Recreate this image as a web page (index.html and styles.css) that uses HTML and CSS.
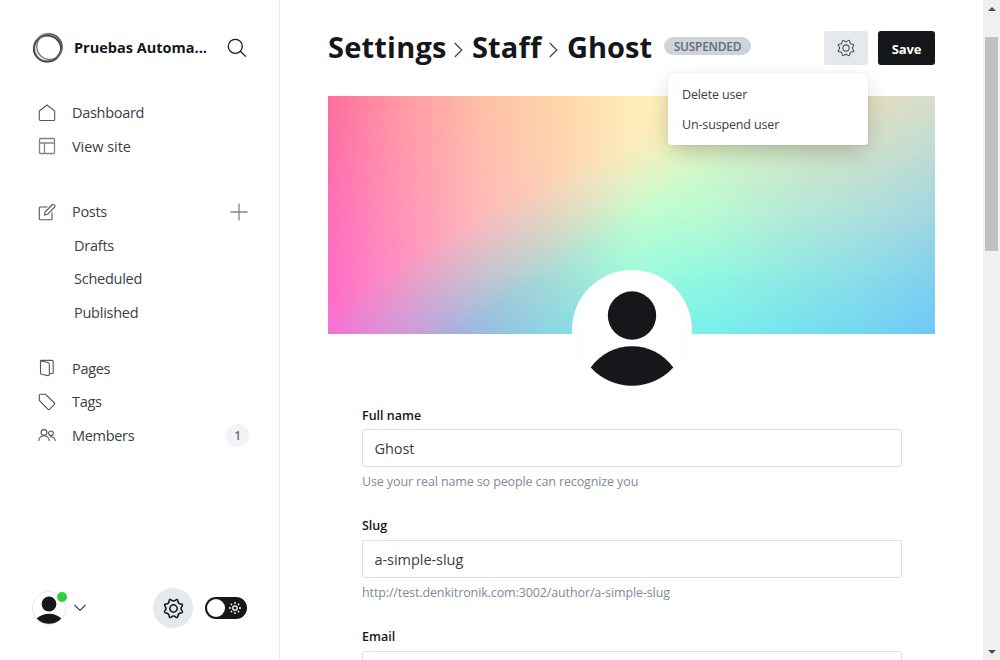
FILE: index.html
```html
<!DOCTYPE html>
<html lang="en">
<head>
<meta charset="utf-8">
<title>Settings - Staff - Ghost</title>
<link rel="stylesheet" href="styles.css">
</head>
<body>
<svg width="0" height="0" class="defs">
  <symbol id="gear" viewBox="-12 -12 24 24">
    <path d="M9.53-2.39Q7.5 0 9.53 2.39Q11.55 4.78 8.43 5.04Q5.3 5.3 5.04 8.43Q4.78 11.55 2.39 9.53Q0 7.5-2.39 9.53Q-4.78 11.55-5.04 8.43Q-5.3 5.3-8.43 5.04Q-11.55 4.78-9.53 2.39Q-7.5 0-9.53-2.39Q-11.55-4.78-8.43-5.04Q-5.3-5.3-5.04-8.43Q-4.78-11.55-2.39-9.53Q0-7.5 2.39-9.53Q4.78-11.55 5.04-8.43Q5.3-5.3 8.43-5.04Q11.55-4.78 9.53-2.39Z"/>
    <circle r="4.2"/>
  </symbol>
</svg>
<div class="app">
  <aside class="sidebar">
    <header class="brand">
      <svg class="logo" viewBox="0 0 32 32">
        <ellipse cx="16" cy="15.6" rx="13.900" ry="13.300" stroke="#aaa" stroke-width="2.600" transform="rotate(-45 16 16)"/>
        <ellipse cx="15.400" cy="16.800" rx="13.600" ry="13" stroke="#3a3a3a" stroke-width="1.600"/>
        <ellipse cx="17.400" cy="14.600" rx="12.800" ry="12.600" stroke="#777" stroke-width="1.400" transform="rotate(30 17 15)"/>
        <ellipse cx="16" cy="15.600" rx="14.200" ry="13" stroke="#555" stroke-width="1" transform="rotate(-45 16 16)"/>
      </svg>
      <span class="site">Pruebas Automa...</span>
      <svg class="search" viewBox="0 0 20 20"><circle cx="8.3" cy="8.3" r="7"/><path d="M13.3 13.3L18.8 18.6"/></svg>
    </header>
    <nav class="nav">
      <a class="row"><svg class="ico" viewBox="0 0 18 18"><path d="M1.3 7L9 1l7.700 6v8.500a1 1 0 0 1-1 1H2.300a1 1 0 0 1-1-1z"/></svg><span>Dashboard</span></a>
      <a class="row"><svg class="ico light" viewBox="0 0 18 18"><rect x="1.500" y="1.500" width="15" height="15" rx="1"/><path d="M1.500 6h15M6.500 6v10.500"/></svg><span class="wide">View site</span></a>
      <a class="row gap-lg"><svg class="ico" viewBox="0 0 18 18"><path d="M9.500 4H2.300a1 1 0 0 0-1 1v10.700a1 1 0 0 0 1 1H13a1 1 0 0 0 1-1V9.500"/><path d="M6.500 12l.7-3.200L14 2a1.600 1.600 0 0 1 2.400 2.300L9.600 11.200z"/></svg><span>Posts</span>
        <svg class="plus" viewBox="0 0 18 18"><path d="M9 .5v17M.5 9h17"/></svg></a>
      <a class="row sub">Drafts</a>
      <a class="row sub">Scheduled</a>
      <a class="row sub">Published</a>
      <a class="row gap-md"><svg class="ico" viewBox="0 0 18 18"><path d="M2.500 2L9.800 3.500a1.800 1.800 0 0 1 1.500 1.800V15.600a1 1 0 0 1-1.200 1L3.500 15.200a1.200 1.200 0 0 1-1-1.200z"/><path d="M2.500 2.200a1 1 0 0 1 .8-.8H14.200a1 1 0 0 1 1 1V13.500a1 1 0 0 1-1 1H11.300"/></svg><span>Pages</span></a>
      <a class="row"><svg class="ico" viewBox="0 0 18 18"><path d="M1.300 2.300a1 1 0 0 1 1-1h5.200L16.400 10a1 1 0 0 1 0 1.400l-4.900 4.900a1 1 0 0 1-1.400 0L1.300 7.500z"/></svg><span>Tags</span></a>
      <a class="row"><svg class="ico" viewBox="0 0 18 18"><circle cx="6" cy="6.500" r="2.900"/><path d="M.8 15v-.7a5.200 4.600 0 0 1 10.400 0v.7"/><circle cx="13" cy="7.300" r="2.300"/><path d="M12 10.900a4.200 4.200 0 0 1 5.300 3.600v.5"/></svg><span>Members</span><span class="count">1</span></a>
    </nav>
    <footer class="foot">
      <div class="me">
        <svg class="me-pic" viewBox="0 0 34 34"><circle cx="17" cy="17" r="16.500" fill="#fff" stroke="#e5e8ea"/><circle cx="17" cy="13" r="7.400" fill="#15171a"/><path d="M4.700 27.400a16.500 14 0 0 1 24.600 0a16.700 16.700 0 0 1-24.600 0z" fill="#15171a"/></svg>
        <i class="online"></i>
      </div>
      <svg class="chev" viewBox="0 0 12 8"><path d="M.5 1L6 6.500 11.500 1"/></svg>
      <span class="cog"><svg viewBox="0 0 24 24"><use href="#gear"/></svg></span>
      <span class="toggle"><i class="knob"></i>
        <svg class="sun" viewBox="-7 -7 14 14"><circle r="2.200"/><path d="M0-6v2M0 4v2M-6 0h2M4 0h2M-4.200-4.200l1.300 1.300M2.900 2.900l1.300 1.300M-4.200 4.200l1.300-1.300M2.900-2.900l1.300-1.300"/></svg></span>
    </footer>
  </aside>
  <main class="main">
    <header class="head">
      <h1 class="title"><span class="c1">Settings</span><svg class="sep" viewBox="0 0 9 16"><path d="M.8 1L7.800 8 .8 15"/></svg><span class="c2">Staff</span><svg class="sep" viewBox="0 0 9 16"><path d="M.8 1L7.800 8 .8 15"/></svg><span class="c3">Ghost</span></h1>
      <span class="badge">SUSPENDED</span>
      <div class="actions">
        <button class="btn-gear"><svg viewBox="0 0 24 24"><use href="#gear"/></svg></button>
        <button class="btn-save">Save</button>
        <div class="menu"><a>Delete user</a><a>Un-suspend user</a></div>
      </div>
    </header>
    <section class="cover">
      <div class="tones warm"><i class="w0"></i><i class="w1"></i></div>
      <div class="tones cool"><i class="k0"></i><i class="k1"></i><i class="k2"></i><i class="k3"></i><i class="k4"></i></div>
      <svg class="avatar" viewBox="0 0 120 120"><circle cx="60" cy="60" r="60" fill="#fff"/><circle cx="60" cy="60" r="56" fill="none" stroke="#f9fafb"/><circle cx="60" cy="45.500" r="24.200" fill="#15171a"/><path d="M18.700 97.500C39 69 81 69 101.300 97.500A56 56 0 0 1 18.700 97.500z" fill="#15171a"/></svg>
    </section>
    <form class="form">
      <div class="field"><label class="first">Full name</label><div class="input">Ghost</div><p>Use your real name so people can recognize you</p></div>
      <div class="field"><label>Slug</label><div class="input">a-simple-slug</div><p>http://test.denkitronik.com:3002/author/a-simple-slug</p></div>
      <div class="field"><label>Email</label><div class="input"></div></div>
    </form>
  </main>
  <div class="scroll"><i class="up"></i><i class="thumb"></i><i class="down"></i></div>
</div>
</body>
</html>
```
FILE: styles.css
```css
* { box-sizing: border-box; }
body { margin: 0; font-family: "Open Sans", "Noto Sans", sans-serif; color: #394047; background: #fff; }
svg { fill: none; flex: none; display: block; }
.defs { position: absolute; }
.app { display: flex; width: 1000px; height: 660px; overflow: hidden; }

.sidebar { width: 280px; flex: none; border-right: 1px solid #e5e8ea; display: flex; flex-direction: column; }
.brand { display: flex; align-items: center; height: 96px; padding-left: 32px; }
.logo { width: 32px; height: 32px; }
.site { font-size: 14.500px; font-weight: 700; color: #15171a; width: 143px; margin: -2px 0 0 10px; white-space: nowrap; }
.search { width: 20px; height: 20px; margin-left: 10px; stroke: #15171a; stroke-width: 1.300; }
.nav { display: flex; flex-direction: column; }
.row { display: flex; align-items: center; height: 33.500px; padding: 0 30px 0 38px; font-size: 14.500px; letter-spacing: -.3px; }
.gap-lg { margin-top: 32px; }
.gap-md { margin-top: 22.500px; }
.sub { padding-left: 74px; letter-spacing: -.25px; }
.wide { letter-spacing: -.05px; }
.ico { width: 18px; height: 18px; margin-right: 16px; stroke: #50575e; stroke-width: 1.100; }
.light { stroke: #7c858d; stroke-width: 1.300; }
.plus { width: 18px; height: 18px; margin: 0 1px 0 auto; stroke: #7c858d; stroke-width: 1.300; }
.count { margin-left: auto; width: 23px; height: 23px; border-radius: 50%; background: #f1f3f4; color: #5b7590; font-size: 12px; font-weight: 600; line-height: 24px; text-align: center; }
.foot { display: flex; align-items: center; margin-top: auto; height: 104px; padding-left: 32px; }
.me { position: relative; width: 34px; height: 34px; }
.me-pic { width: 34px; height: 34px; }
.online { position: absolute; left: 25px; top: 1px; width: 10px; height: 10px; border-radius: 50%; background: #30cf43; }
.chev { width: 12px; height: 8px; margin-left: 8px; stroke: #394047; stroke-width: 1.100; }
.cog { width: 40px; height: 40px; margin-left: 67px; border-radius: 50%; background: #e5e9ed; display: grid; place-items: center; }
.cog svg { width: 21px; height: 21px; stroke: #15171a; stroke-width: 1.700; }
.toggle { width: 42px; height: 22px; margin-left: 12px; border-radius: 11px; background: #15171a; display: flex; align-items: center; padding: 0 5px 0 2px; justify-content: space-between; }
.knob { width: 18px; height: 18px; border-radius: 50%; background: #fff; }
.sun { width: 14px; height: 14px; stroke: #fff; stroke-width: 1.300; }

.main { width: 703px; flex: none; padding: 0 48px; }
.head { display: flex; align-items: center; height: 96px; }
.title { display: flex; align-items: center; margin: -2px 0 0; font-size: 29px; font-weight: 700; color: #15171a; line-height: 40px; }
.sep { width: 9px; height: 16px; margin: 6px 9px 0 8px; stroke: #394047; stroke-width: 1.200; }
.title span { white-space: nowrap; }
.c1 { width: 118px; letter-spacing: .2px; }
.c2 { width: 69px; letter-spacing: .15px; }
.c3 { width: 85px; }
.badge { width: 87px; height: 18px; margin: -4px 0 0 12px; border-radius: 9px; background: #ced4d9; color: #626d79; font-size: 12px; font-weight: 600; letter-spacing: -.25px; line-height: 19px; text-align: center; }
.actions { position: relative; display: flex; gap: 10px; margin-left: auto; }
button { border: 0; padding: 0; height: 34px; border-radius: 3px; font-family: inherit; }
.btn-gear { width: 44px; background: #e5e9ed; display: grid; place-items: center; }
.btn-gear svg { width: 18px; height: 18px; stroke: #50575e; stroke-width: 1.500; }
.btn-save { width: 57px; background: #15171a; color: #fff; font-size: 13px; font-weight: 700; padding-top: 1px; letter-spacing: -.1px; }
.menu { position: absolute; z-index: 2; top: 42px; right: 67px; width: 200px; height: 72px; padding: 7px 14px; border-radius: 3px; background: #fff; box-shadow: 0 0 1px rgba(0,0,0,.25), 0 8px 22px -4px rgba(0,0,0,.25); }
.menu a { display: block; line-height: 30px; font-size: 12.500px; white-space: nowrap; letter-spacing: -.15px; }

/* Warm tones underneath; cool tones fade in past the diagonal. */
.cover { position: relative; display: grid; height: 238px; }
.tones { grid-area: 1 / 1; display: grid; }
.tones i { grid-area: 1 / 1; }
.cool { mask-image: linear-gradient(148deg, transparent 34%, rgba(0,0,0,.5) 41.500%, #000 51%); }
.w0 { background: linear-gradient(90deg,#ff6f9f,#ff9aa3 12.500%,#ffbfa6 25%,#ffd5a8 37.500%,#ffeeb5 50%,#fcf0b5 62.500%,#f2e8bc 75%,#e6dcc0 88%,#d8dfc8); }
.w1 { background: linear-gradient(90deg,#ff6cd2,#ff90cc 12.500%,#ffb4cc 25%,#ffd0cc 40%,#ffe8cc 60%,#ffeecc); mask-image: linear-gradient(transparent,#000); }
.k0 { background: linear-gradient(90deg,#ffe8b5 50%,#faeeb8 62.500%,#f2e8bc 75%,#e6dcc0 88%,#d8dfc8); }
.k1 { background: linear-gradient(90deg,#f0d8c0 30%,#e8f4c4 50%,#d6fac8 58%,#d2f0c8 68%,#cfe6c8 78%,#cce0cc 88%,#bcdcd6); }
.k2 { background: linear-gradient(90deg,#c0b0d0,#c4c4cc 25%,#cadcc8 37.500%,#c0fdcf 52%,#b9fad2 62.500%,#b4ebd8 75%,#aee0dc 88%,#a2d6e2); }
.k3 { background: linear-gradient(90deg,#c09cd8,#b0bcd8 20%,#a6dcd6 37.500%,#9efbdc 50%,#92f7e0 62.500%,#90eae2 75%,#8cdce8 88%,#82d0ee); }
.k4 { background: linear-gradient(90deg,#d87cdc,#c09cdc 13%,#98bce0 26%,#88d8e4 37.500%,#7cecea 50%,#78f0ea 62.500%,#74e4f0 75%,#72d6f2 88%,#6fc8f8); }
.k1 { mask-image: linear-gradient(transparent 0, #000 25%); }
.k2 { mask-image: linear-gradient(transparent 25%, #000 50%); }
.k3 { mask-image: linear-gradient(transparent 50%, #000 75%); }
.k4 { mask-image: linear-gradient(transparent 75%, #000 100%); }
.avatar { position: absolute; left: 244px; top: 174px; width: 120px; height: 120px; }

.form { margin: 71px 33px 0 34px; display: flex; flex-direction: column; }
.field { height: 111px; }
.field label { display: block; height: 24px; line-height: 20px; font-size: 12.500px; font-weight: 600; color: #15171a; }
.field .first { line-height: 21px; }
.input { height: 38px; border: 1px solid #dddfe1; border-radius: 3px; padding: 0 11.500px; font-size: 14.500px; line-height: 37px; letter-spacing: -.05px; }
.field p { margin: 5px 0 0; font-size: 12.500px; line-height: 19px; color: #7c8b9a; white-space: nowrap; letter-spacing: -.12px; }

.scroll { width: 17px; flex: none; background: #f0f0f0; display: flex; flex-direction: column; align-items: center; padding: 7px 0 6px; }
.up, .down { border: 4px solid transparent; width: 0; height: 0; }
.up { border-top: 0; border-bottom-color: #505050; }
.down { border-bottom: 0; border-top-color: #505050; margin-top: auto; }
.thumb { width: 13px; height: 214px; margin-top: 26px; background: #c1c1c1; }
```
